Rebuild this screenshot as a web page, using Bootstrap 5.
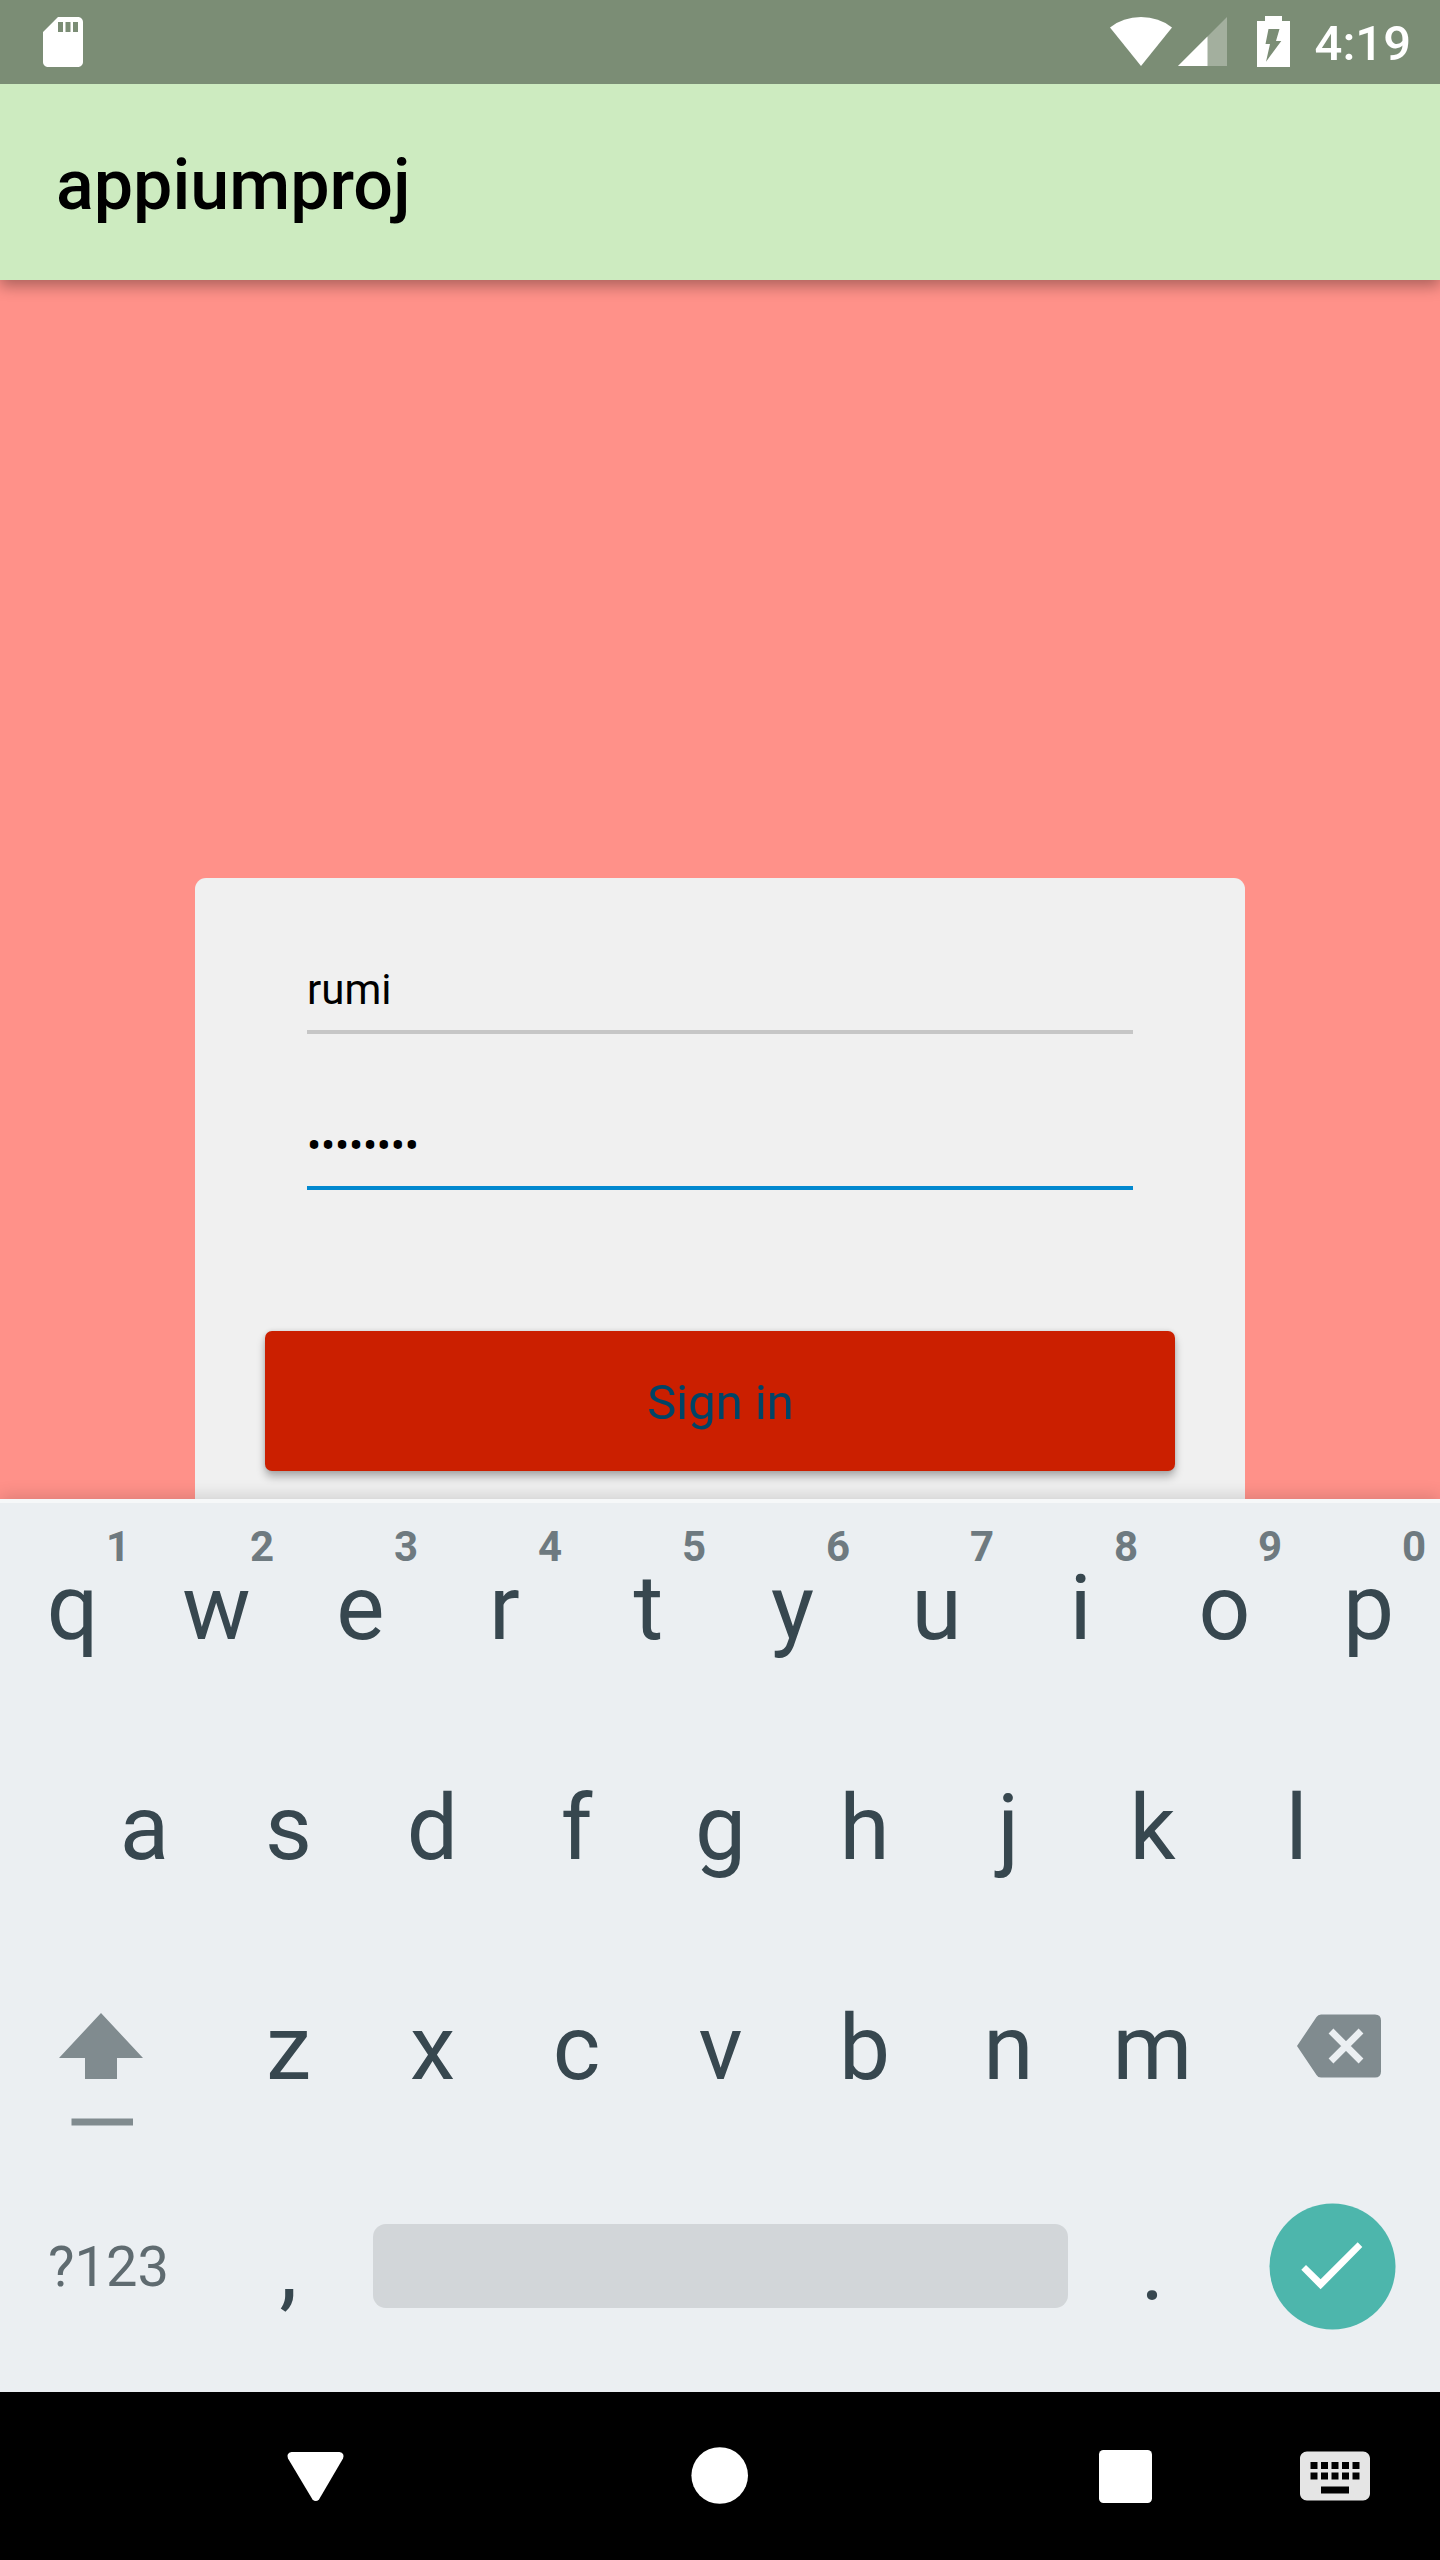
<!DOCTYPE html>
<html lang="en">
<head>
<meta charset="utf-8">
<meta name="viewport" content="width=device-width, initial-scale=1">
<title>appiumproj</title>
<link href="https://cdn.jsdelivr.net/npm/bootstrap@5.3.0/dist/css/bootstrap.min.css" rel="stylesheet">
<style>
  body { font-family: Roboto, sans-serif; background: #000; }
  .phone { width: 1440px; height: 2560px; }
  .status { height: 84px; background: #7b8d75; padding: 0 29px 0 33px; z-index: 3; }
  .clock { font-size: 49px; line-height: 60px; font-weight: 500; padding-top: 4px; }
  .status-icons { margin-right: 1px; }
  .appbar { height: 196px; background: #cdebc0; padding: 6px 56px 0; z-index: 2; box-shadow: 0 6px 14px rgba(0,0,0,.33); }
  .appbar h1 { font-size: 70px; line-height: 82px; font-weight: 500; color: #000; }
  .stage { height: 1219px; background: #ff9189; padding-top: 598px; }
  .login { width: 1050px; height: 760px; background: #f0f0f0; border-radius: 11px 11px 0 0; padding: 86px 70px 0; }
  .line-field { margin: 0 42px; height: 70px; padding-bottom: 15px; border-bottom: 4px solid #c6c6c6; font-size: 42px; line-height: 51px; color: #000; }
  .line-field.active { margin-top: 86px; border-color: #0288cf; letter-spacing: -.2px; }
  .signin { height: 140px; margin-top: 141px; background: #cb1f00; color: #046; border-radius: 7px; font-size: 49px; line-height: 60px; padding: 4px 0 0 1px; box-shadow: 0 6px 8px rgba(0,0,0,.27), 0 0 5px rgba(0,0,0,.12); }
  .keyboard { height: 893px; background: #ebeff2; border-top: 4px solid #f6f8f9; z-index: 2; box-shadow: 0 -3px 16px rgba(0,0,0,.14); }
  .keyrows { margin-top: -5px; }
  .keyrow { height: 220px; }
  .key { width: 144px; font-size: 91px; line-height: 110px; color: #37474f; padding-left: 1px; }
  .key.wide { width: 216px; padding-left: 0; }
  .hint { top: 28px; right: 14px; font-size: 42px; line-height: 42px; font-weight: 700; color: #6e7a80; }
  .symbols { font-size: 56px; line-height: 68px; color: #5f6b70; padding-bottom: 2px; }
  .space { width: 695px; height: 84px; border-radius: 13px; background: #d2d6d9; margin: 0 12px 4px 13px; }
  .navbar-soft { height: 168px; background: #000; }
</style>
</head>
<body>
<div class="phone d-flex flex-column overflow-hidden">
  <header class="status d-flex align-items-center justify-content-between flex-shrink-0 text-white position-relative">
    <svg width="60" height="60" viewBox="0 0 24 24" fill="#fff"><path d="M18 2h-8L4 8v12c0 1.1.9 2 2 2h12c1.1 0 2-.9 2-2V4c0-1.1-.9-2-2-2zm-6 6h-2V4h2v4zm3 0h-2V4h2v4zm3 0h-2V4h2v4z"/></svg>
    <div class="d-flex align-items-center">
      <svg class="status-icons" width="206" height="84" viewBox="1108 0 206 84" fill="#fff">
        <path d="M1110 27.5Q1123 17 1141 17T1172 27.500L1141 66z"/>
        <path d="M1227 17V66H1178z" opacity=".3"/>
        <path d="M1207.500 36.500V66H1178z"/>
        <path fill-rule="evenodd" d="M1265 16h17v5h8v46h-33V21h8zM1268.500 29L1265.500 44H1270L1266 61.700L1281.300 41H1276L1279.500 29z"/>
      </svg>
      <span class="clock">4:19</span>
    </div>
  </header>

  <div class="appbar d-flex align-items-center flex-shrink-0 position-relative">
    <h1 class="m-0">appiumproj</h1>
  </div>

  <main class="stage flex-shrink-0 overflow-hidden">
    <form class="login mx-auto">
      <div class="line-field">rumi</div>
      <div class="line-field active">••••••••</div>
      <button type="button" class="btn signin w-100 border-0 d-flex align-items-center justify-content-center">Sign in</button>
    </form>
  </main>

  <section class="keyboard flex-shrink-0 position-relative">
    <div class="keyrows">
      <div class="keyrow d-flex text-center">
        <div class="key d-flex align-items-center justify-content-center position-relative">q<span class="hint position-absolute">1</span></div>
        <div class="key d-flex align-items-center justify-content-center position-relative">w<span class="hint position-absolute">2</span></div>
        <div class="key d-flex align-items-center justify-content-center position-relative">e<span class="hint position-absolute">3</span></div>
        <div class="key d-flex align-items-center justify-content-center position-relative">r<span class="hint position-absolute">4</span></div>
        <div class="key d-flex align-items-center justify-content-center position-relative">t<span class="hint position-absolute">5</span></div>
        <div class="key d-flex align-items-center justify-content-center position-relative">y<span class="hint position-absolute">6</span></div>
        <div class="key d-flex align-items-center justify-content-center position-relative">u<span class="hint position-absolute">7</span></div>
        <div class="key d-flex align-items-center justify-content-center position-relative">i<span class="hint position-absolute">8</span></div>
        <div class="key d-flex align-items-center justify-content-center position-relative">o<span class="hint position-absolute">9</span></div>
        <div class="key d-flex align-items-center justify-content-center position-relative">p<span class="hint position-absolute">0</span></div>
      </div>
      <div class="keyrow d-flex align-items-center justify-content-center text-center">
        <div class="key">a</div><div class="key">s</div><div class="key">d</div><div class="key">f</div><div class="key">g</div><div class="key">h</div><div class="key">j</div><div class="key">k</div><div class="key">l</div>
      </div>
      <div class="keyrow d-flex align-items-center text-center">
        <div class="key wide d-flex">
          <svg width="216" height="220" viewBox="0 1938 216 220" fill="#808b8f"><path d="M101 2013L143 2058H117V2079H85V2058H59z"/><path d="M71.500 2118.500H133V2125.500H71.500z"/></svg>
        </div>
        <div class="key">z</div><div class="key">x</div><div class="key">c</div><div class="key">v</div><div class="key">b</div><div class="key">n</div><div class="key">m</div>
        <div class="key wide d-flex">
          <svg width="216" height="220" viewBox="1224 1938 216 220"><path fill="#808b8f" d="M1297 2046L1316.500 2017Q1318 2014.500 1321 2014.500H1375Q1381 2014.500 1381 2020.500V2071.500Q1381 2077.500 1375 2077.500H1321Q1318 2077.500 1316.500 2075z"/><path d="M1331 2031L1361 2061M1361 2031L1331 2061" stroke="#ebeff2" stroke-width="6.800"/></svg>
        </div>
      </div>
      <div class="keyrow d-flex align-items-center text-center">
        <div class="key wide d-flex align-items-center"><span class="symbols ps-5">?123</span></div>
        <div class="key">,</div>
        <div class="space"></div>
        <div class="key">.</div>
        <div class="key wide d-flex">
          <svg width="216" height="220" viewBox="1224 2158 216 220"><circle cx="1332.500" cy="2266.500" r="63" fill="#4db6ac"/><path fill="#fff" d="M1301.300 2269.700L1306 2265L1320.600 2279.300L1357.700 2242.300L1362.300 2247L1320.600 2289.300z"/></svg>
        </div>
      </div>
    </div>
  </section>

  <nav class="navbar-soft flex-shrink-0">
    <svg class="d-block" width="1440" height="168" viewBox="0 2392 1440 168" fill="#fff">
      <path d="M291.500 2452H339.500Q345 2453 343 2458.500L319 2499.500Q315.800 2502.500 312.500 2499.500L288 2458.500Q286 2453 291.500 2452z"/>
      <circle cx="719.700" cy="2475.500" r="28.300"/>
      <rect x="1099" y="2450" width="53" height="53" rx="4.500"/>
      <path fill="#e5e5e5" transform="translate(1293 2434) scale(3.5)" d="M20 5H4c-1.100 0-2 .9-2 2v10c0 1.100.9 2 2 2h16c1.100 0 2-.9 2-2V7c0-1.100-.9-2-2-2zm-9 3h2v2h-2V8zm0 3h2v2h-2v-2zM8 8h2v2H8V8zm0 3h2v2H8v-2zm-1 2H5v-2h2v2zm0-3H5V8h2v2zm9 7H8v-2h8v2zm0-4h-2v-2h2v2zm0-3h-2V8h2v2zm3 3h-2v-2h2v2zm0-3h-2V8h2v2z"/>
    </svg>
  </nav>
</div>
<script src="https://cdn.jsdelivr.net/npm/bootstrap@5.3.0/dist/js/bootstrap.bundle.min.js"></script>
</body>
</html>
